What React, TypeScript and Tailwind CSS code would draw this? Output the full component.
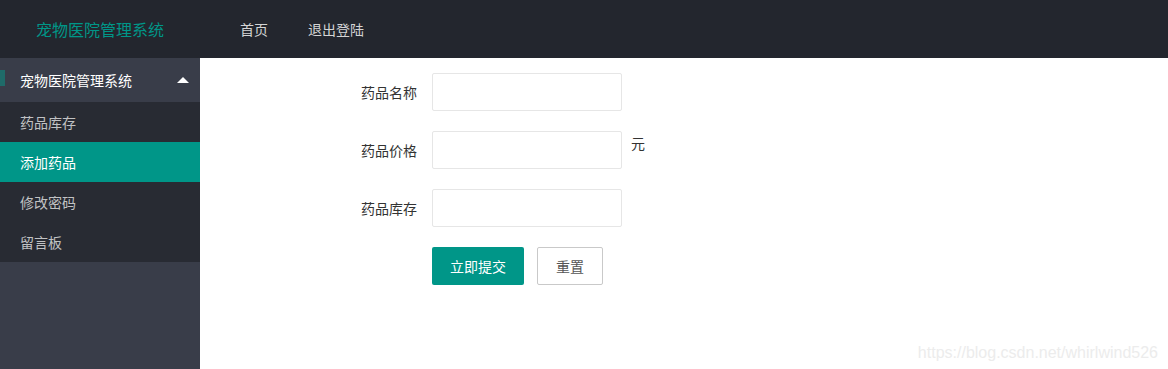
const font = { fontFamily: '"Noto Sans CJK SC", "Liberation Sans", sans-serif' };

const menu = [
  { name: "药品库存", active: false },
  { name: "添加药品", active: true },
  { name: "修改密码", active: false },
  { name: "留言板", active: false },
];

const fields = [
  { label: "药品名称", unit: "" },
  { label: "药品价格", unit: "元" },
  { label: "药品库存", unit: "" },
];

export default function App() {
  return (
    <div className="flex h-[369px] w-[1168px] flex-col overflow-hidden bg-white text-[14px]" style={font}>
      {/* header */}
      <div className="flex h-[58px] shrink-0 items-center bg-[#23262e]">
        <div className="w-[200px] pl-[36px] text-[16px] leading-none text-[#009688]">宠物医院管理系统</div>
        <div className="ml-[20px] flex h-full items-center">
          <a className="px-[20px] leading-none text-[#d3d4d5]">首页</a>
          <a className="px-[20px] leading-none text-[#d3d4d5]">退出登陆</a>
        </div>
      </div>

      <div className="flex flex-1">
        {/* sidebar */}
        <div className="w-[200px] shrink-0 bg-[#393d49]">
          <div className="relative flex h-[44px] items-center pl-[20px] pr-[11px] text-white">
            <span className="absolute left-0 top-[12px] h-[16px] w-[5px] bg-[#1f6b69]" />
            <span className="flex-1 leading-none">宠物医院管理系统</span>
            <span className="h-0 w-0 border-x-[6px] border-b-[6px] border-x-transparent border-b-white" />
          </div>
          <div className="bg-[#282b33]">
            {menu.map((m) => (
              <div
                key={m.name}
                className={`flex h-[40px] items-center pl-[20px] leading-none ${
                  m.active ? "bg-[#009688] text-white" : "text-[#c1c2c4]"
                }`}
              >
                {m.name}
              </div>
            ))}
          </div>
        </div>

        {/* content */}
        <div className="relative flex-1 pt-[15px]">
          <div className="flex flex-col gap-[20px] pl-[122px]">
            {fields.map((f) => (
              <div key={f.label} className="flex items-start">
                <label className="flex h-[38px] w-[110px] items-center justify-end pr-[15px] leading-none text-[#333]">
                  {f.label}
                </label>
                <input className="h-[38px] w-[190px] rounded-[2px] border border-[#e6e6e6] bg-white px-[10px] outline-none" />
                {f.unit && <span className="ml-[9px] mt-[2px] leading-5 text-[#333]">{f.unit}</span>}
              </div>
            ))}
            <div className="flex pl-[110px]">
              <button className="h-[38px] rounded-[2px] bg-[#009688] px-[18px] text-white">立即提交</button>
              <button className="ml-[13px] h-[38px] rounded-[2px] border border-[#c9c9c9] bg-white px-[18px] text-[#555]">
                重置
              </button>
            </div>
          </div>
          <div
            className="absolute bottom-[8px] right-[10px] text-[16px] leading-none text-[#ececec]"
            style={{ fontFamily: '"Liberation Sans", sans-serif' }}
          >
            https://blog.csdn.net/whirlwind526
          </div>
        </div>
      </div>
    </div>
  );
}
